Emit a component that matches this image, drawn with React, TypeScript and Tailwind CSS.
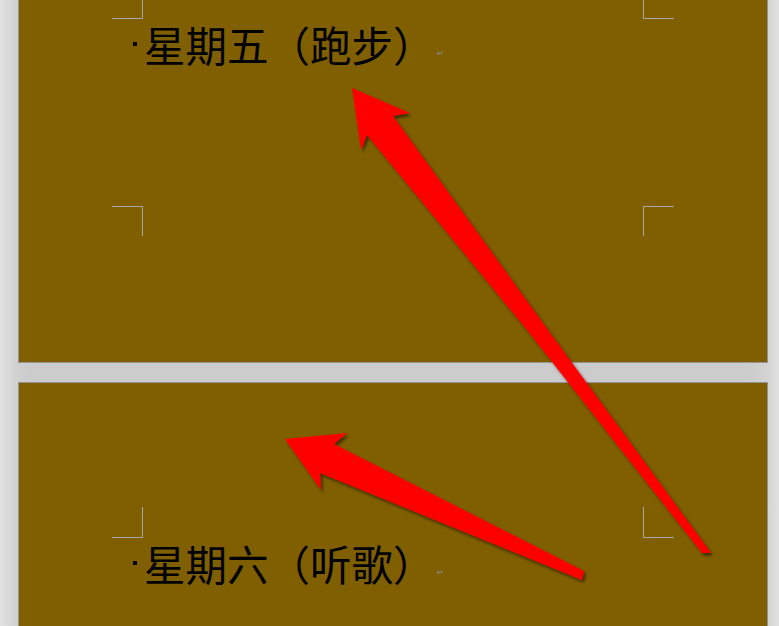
import React from 'react'

const cjk = "font-['Noto_Sans_CJK_SC','Noto_Sans_CJK_JP',sans-serif]"

function Marks({ bottom, h }: { bottom?: boolean; h: string }) {
  // Word-style margin crop marks, left and right of the text area
  const side = bottom ? 'border-t' : 'border-b'
  return (
    <div className={`flex ${h}`}>
      <div className={`ml-[93px] w-[31px] border-r ${side} border-[#a8a8a8]`} />
      <div className="w-[500px]" />
      <div className={`w-[31px] border-l ${side} border-[#a8a8a8]`} />
    </div>
  )
}

function Line({ text }: { text: string }) {
  return (
    <div className="mt-[4px] flex h-[42px] items-center pl-[114px]">
      <span className="h-[4px] w-[4px] bg-black" />
      <span className={`ml-[7px] text-[41.5px] leading-[42px] text-black ${cjk}`}>{text}</span>
      <span className="ml-[2px] mt-[18px] font-['DejaVu_Sans',sans-serif] text-[9px] leading-none text-[#8c8c8c]">↵</span>
    </div>
  )
}

function Arrows() {
  return (
    <svg className="pointer-events-none absolute left-0 top-0" width="779" height="626" viewBox="0 0 779 626">
      <defs>
        <filter id="shade" x="-10%" y="-10%" width="120%" height="120%">
          <feDropShadow dx="2" dy="2.5" stdDeviation="1.5" floodColor="#000" floodOpacity="0.55" />
        </filter>
      </defs>
      <g fill="#ff0000" filter="url(#shade)">
        <polygon points="352,88 410,113 393,116 548,330 711,553 702,553 527,330 367,135 361,150" />
        <polygon points="285,439 347,433 334,444 584,571 582,580 320,473 321,490" />
      </g>
    </svg>
  )
}

export default function App() {
  return (
    <div className="relative h-[626px] w-[779px] overflow-hidden bg-[linear-gradient(to_right,#e2e2e2_0px,#d0d0d0_18px,#cccccc_30px,#cccccc_750px,#d4d4d4_768px,#e0e0e0_779px)]">
      <div className="flex flex-col">
        {/* page 1, top cut off */}
        <div className="ml-[18px] flex h-[363px] w-[750px] flex-col border-x border-b border-[#949494] bg-[#7f5f00]">
          <Marks h="h-[19px]" />
          <Line text="星期五（跑步）" />
          <div className="mt-[141px]">
            <Marks bottom h="h-[30px]" />
          </div>
        </div>

        {/* page 2 */}
        <div className="ml-[18px] mt-[19px] flex h-[300px] w-[750px] flex-col border-x border-t border-[#949494] bg-[#7f5f00]">
          <div className="h-[124px]" />
          <Marks h="h-[31px]" />
          <Line text="星期六（听歌）" />
        </div>
      </div>
      <Arrows />
    </div>
  )
}
